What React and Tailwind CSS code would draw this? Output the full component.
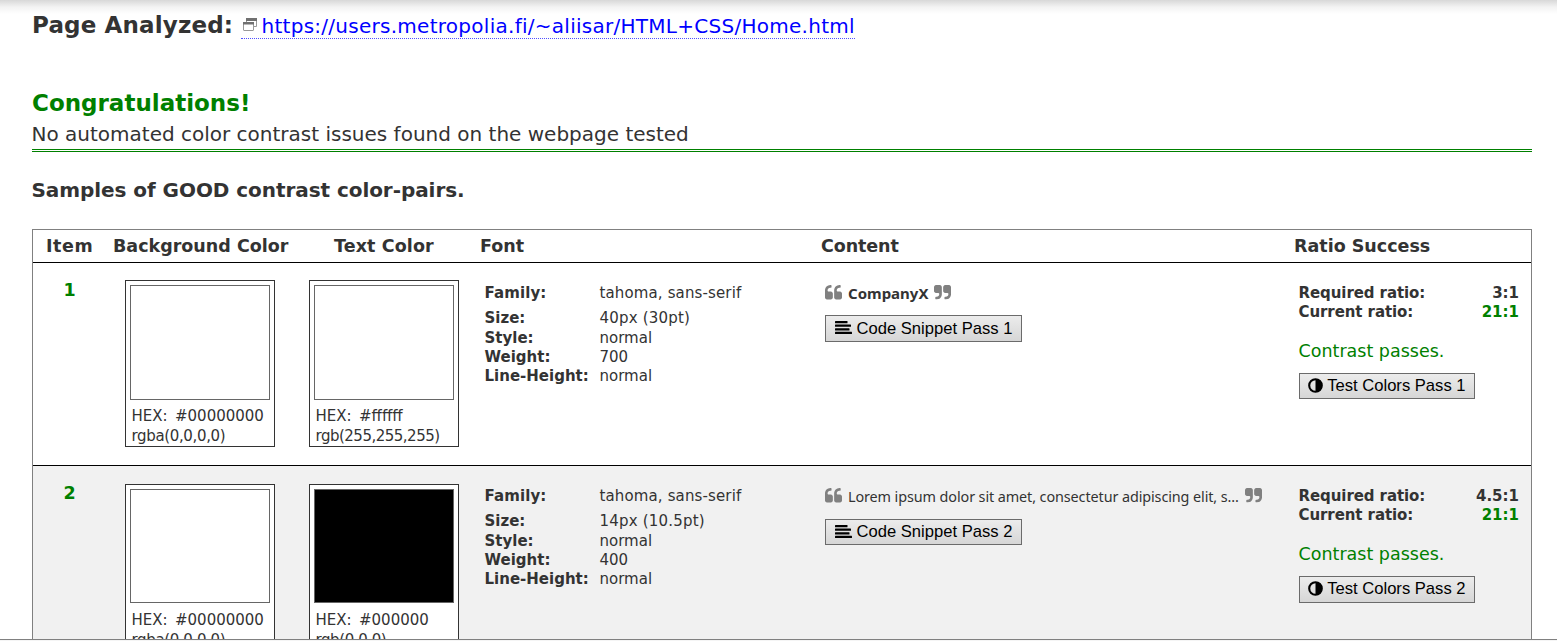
import React from "react";

const rows = [
  {
    id: 1,
    rowClass: "h-[203px] border-b border-black bg-white",
    buttonPad: "h-[27px]",
    testPad: "h-[26px]",
    swatchPad: "mt-[17px]",
    swatchHeight: "h-[115px]",
    labelPad: "pt-[6px]",
    textColor: { fill: "bg-white", hex: "#ffffff", rgb: "rgb(255,255,255)", rgbClass: "tracking-[-0.5px]" },
    family: "tahoma, sans-serif",
    size: "40px (30pt)",
    weight: "700",
    content: "CompanyX",
    contentClass: "text-[15px] leading-5 font-bold",
    required: "3:1",
  },
  {
    id: 2,
    rowClass: "h-[203px] bg-[#f1f1f1]",
    buttonPad: "mt-[1px] h-[26px]",
    testPad: "h-[27px]",
    swatchPad: "mt-[18px]",
    swatchHeight: "h-[114px]",
    labelPad: "pt-[7px]",
    textColor: { fill: "bg-black", hex: "#000000", rgb: "rgb(0,0,0)", rgbClass: "tracking-[-0.4px]" },
    family: "tahoma, sans-serif",
    size: "14px (10.5pt)",
    weight: "400",
    content: "Lorem ipsum dolor sit amet, consectetur adipiscing elit, s...",
    contentClass: "text-[14.4px] leading-[22px] tracking-[-0.1px]",
    required: "4.5:1",
  },
];

const columns = "grid grid-cols-[92px_184px_164px_340px_473px_1fr]";

function QuoteIcon({ className }) {
  return (
    <svg className={`h-[14.5px] w-[17px] text-[#808080] ${className}`} viewBox="64 128 1664 1408" fill="currentColor">
      <path d="M832 960v384q0 80-56 136t-136 56h-384q-80 0-136-56t-56-136v-704q0-104 40.5-198.5t109.5-163.5 163.5-109.5 198.5-40.5h64q26 0 45 19t19 45v128q0 26-19 45t-45 19h-64q-106 0-181 75t-75 181v32q0 40 28 68t68 28h224q80 0 136 56t56 136zm896 0v384q0 80-56 136t-136 56h-384q-80 0-136-56t-56-136v-704q0-104 40.5-198.5t109.5-163.5 163.5-109.5 198.5-40.5h64q26 0 45 19t19 45v128q0 26-19 45t-45 19h-64q-106 0-181 75t-75 181v32q0 40 28 68t68 28h224q80 0 136 56t56 136z" />
    </svg>
  );
}

function AlignIcon() {
  return (
    <svg className="mr-[5px] mb-[2px] h-[13px] w-[17px]" viewBox="0 0 17 13" fill="currentColor">
      <rect x="0" y="0" width="12.5" height="2.2" rx="0.5" />
      <rect x="0" y="3.6" width="16" height="2.2" rx="0.5" />
      <rect x="0" y="7.2" width="14.5" height="2.2" rx="0.5" />
      <rect x="0" y="10.8" width="17" height="2.2" rx="0.5" />
    </svg>
  );
}

function ContrastIcon() {
  return (
    <svg className="mr-[5px] mb-px size-[15px]" viewBox="0 0 15 15">
      <circle cx="7.5" cy="7.5" r="6.3" fill="none" stroke="currentColor" strokeWidth="2.1" />
      <path d="M7.5 1a6.5 6.5 0 0 1 0 13z" fill="currentColor" />
    </svg>
  );
}

function Swatch({ row, fill, hex, rgb, rgbClass }) {
  return (
    <div className={`h-[167px] w-[150px] border border-[#333] bg-white p-1 ${row.swatchPad}`}>
      <div className={`border border-[#666] ${row.swatchHeight} ${fill}`} />
      <div className={`pl-[1.5px] text-[15px] leading-5 whitespace-nowrap ${row.labelPad}`}>
        <div className="flex"><span className="w-[43.5px]">HEX:</span><span>{hex}</span></div>
        <div className={rgbClass}>{rgb}</div>
      </div>
    </div>
  );
}

function Field({ name, value, nameClass = "", valueClass = "" }) {
  return (
    <div className="flex">
      <b className={`w-[115px] ${nameClass}`}>{name}</b>
      <span className={valueClass}>{value}</span>
    </div>
  );
}

const button =
  "flex items-center border border-[#6b6b6b] bg-linear-to-b from-[#ececec] to-[#d6d6d6] font-['Liberation_Sans',sans-serif] text-[16.6px] leading-5 text-black whitespace-nowrap";

function Row({ row }) {
  return (
    <div className={`${columns} ${row.rowClass}`}>
      <div className="pt-4 pl-[30.5px] text-[17.5px] leading-[22px] font-bold text-[#008000]">{row.id}</div>
      <Swatch row={row} fill="bg-white" hex="#00000000" rgb="rgba(0,0,0,0)" rgbClass="tracking-[-0.35px]" />
      <Swatch row={row} {...row.textColor} />
      <div className="pt-[21px] pl-[11.5px] text-[15px] leading-[19.3px] whitespace-nowrap">
        <div className="pb-[6px]">
          <Field name="Family:" value={row.family} nameClass="tracking-[0.1px]" valueClass="tracking-[0.13px]" />
        </div>
        <Field name="Size:" value={row.size} valueClass="tracking-[0.2px]" />
        <Field name="Style:" value="normal" />
        <Field name="Weight:" value={row.weight} />
        <Field name="Line-Height:" value="normal" />
      </div>
      <div className="pt-5 pl-3">
        <div className="flex h-8 items-start">
          <QuoteIcon className="mt-[2px]" />
          <span className={`ml-[6px] font-['Noto_Sans',sans-serif] whitespace-nowrap ${row.contentClass}`}>{row.content}</span>
          <QuoteIcon className="mt-[2px] ml-[6px] rotate-180" />
        </div>
        <button className={`${button} w-[197px] pl-[9px] ${row.buttonPad}`}>
          <AlignIcon />
          <span className="-ml-[0.5px]">Code Snippet Pass {row.id}</span>
        </button>
      </div>
      <div className="pt-[21px] pr-3 pl-[13px] text-[15px] leading-[19.3px] font-bold">
        <div className="flex justify-between"><span className="-ml-[0.5px] tracking-[-0.08px]">Required ratio:</span><span>{row.required}</span></div>
        <div className="flex justify-between"><span className="-ml-[0.5px] tracking-[-0.08px]">Current ratio:</span><span className="text-[#008000]">21:1</span></div>
        <p className="mt-[15px] -ml-[0.5px] text-[17.5px] leading-[26px] font-normal text-[#008000]">Contrast passes.</p>
        <button className={`${button} mt-[9px] w-[176px] pl-2 font-normal ${row.testPad}`}>
          <ContrastIcon />
          <span className="-ml-[0.8px]">Test Colors Pass {row.id}</span>
        </button>
      </div>
    </div>
  );
}

export default function App() {
  return (
    <div className="flex h-[641px] w-[1557px] flex-col overflow-hidden bg-white font-['DejaVu_Sans',Verdana,sans-serif] text-[#333]">
      <div className="h-[639px] shrink-0 overflow-hidden bg-[linear-gradient(to_bottom,#d8d8d8,#f3f3f3_7px,#fff_14px)] bg-[length:100%_14px] bg-no-repeat pr-[25px] pl-8">
        <div className="flex h-[82px] items-start pt-[10px]">
          <h1 className="w-[209px] text-[23px] leading-[30px] font-bold tracking-[0.15px] whitespace-nowrap">Page Analyzed:</h1>
          <a href="#home" className="flex h-[29px] border-b border-dotted border-[#5050ff] pl-[2px] text-[20px] leading-8 tracking-[0.27px] whitespace-nowrap text-[#0000ff]">
            <svg className="mt-[8px] mr-[4.5px] h-[13px] w-[14px]" viewBox="0 0 14 13" fill="none">
              <path d="M3.5 .5h10v8h-10z" fill="#fff" stroke="#999" />
              <path d="M3 0h11v3H3z" fill="#707070" />
              <rect x=".5" y="4.5" width="10" height="8" rx=".5" fill="#fff" stroke="#999" />
              <path d="M0 4h11v2.5H0z" fill="#707070" />
            </svg>
            https://users.metropolia.fi/~aliisar/HTML+CSS/Home.html
          </a>
        </div>
        <div className="h-[70px] border-b-[3px] border-double border-[#008000] pt-[6px]">
          <h2 className="text-[23px] leading-[30px] font-bold text-[#008000]">Congratulations!</h2>
          <p className="-ml-[0.5px] text-[20px] leading-8">No automated color contrast issues found on the webpage tested</p>
        </div>
        <h3 className="-ml-[0.5px] pt-6 text-[20px] leading-[28px] font-bold tracking-[-0.06px]">Samples of GOOD contrast color-pairs.</h3>
        <div className="mt-[25px] border-x border-t border-[#808080]">
          <div className={`${columns} h-[33px] border-b border-black text-[17.5px] leading-8 font-bold whitespace-nowrap`}>
            <span className="pl-[13px] tracking-[0.6px]">Item</span>
            <span className="-ml-3">Background Color</span>
            <span className="pl-[25px] tracking-[0.1px]">Text Color</span>
            <span className="pl-[7px]">Font</span>
            <span className="pl-2 tracking-[-0.1px]">Content</span>
            <span className="pl-2">Ratio Success</span>
          </div>
          {rows.map((row) => (
            <Row key={row.id} row={row} />
          ))}
        </div>
      </div>
      <div className="h-0.5 shrink-0 border-t border-[#808080] bg-[#f5f5f5]" />
    </div>
  );
}
